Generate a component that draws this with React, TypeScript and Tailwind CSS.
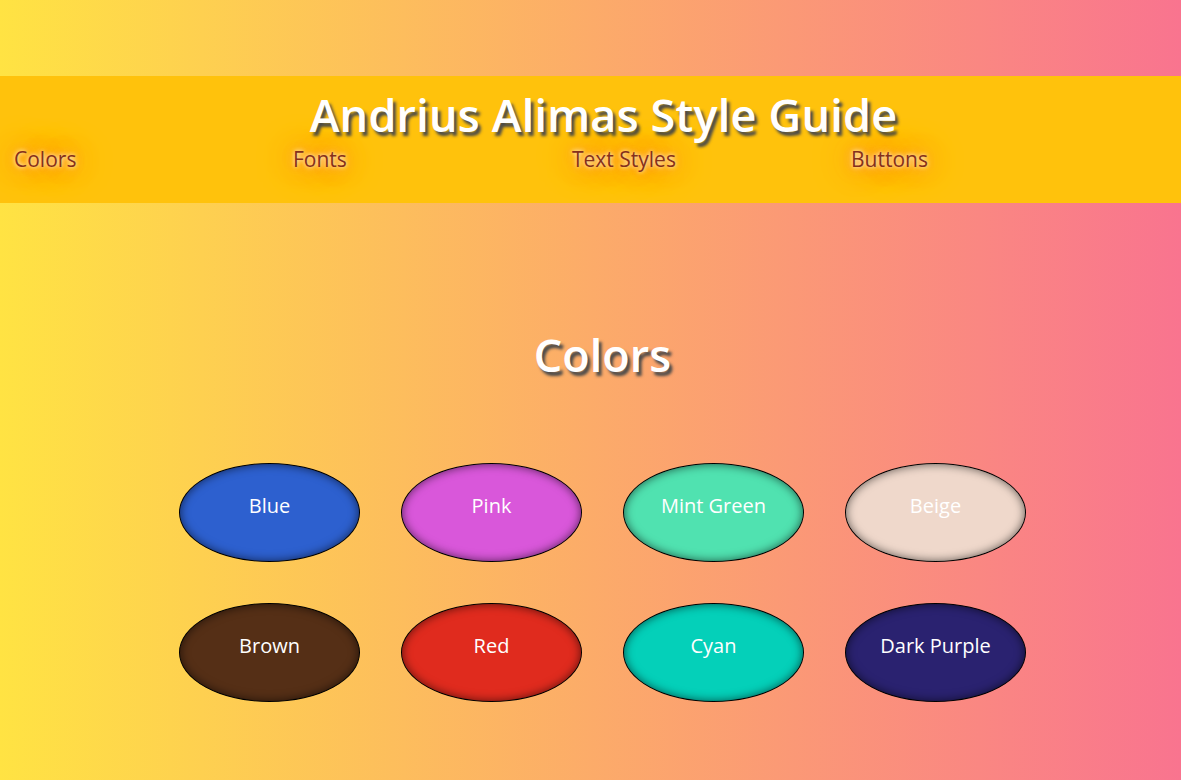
const navLinks = ["Colors", "Fonts", "Text Styles", "Buttons"];

const swatches = [
  { name: "Blue", bg: "bg-[#2d60cf]" },
  { name: "Pink", bg: "bg-[#d957da]" },
  { name: "Mint Green", bg: "bg-[#50e2b0]" },
  { name: "Beige", bg: "bg-[#efd8cb]" },
  { name: "Brown", bg: "bg-[#552f16]" },
  { name: "Red", bg: "bg-[#e02b1e]" },
  { name: "Cyan", bg: "bg-[#04d0b9]" },
  { name: "Dark Purple", bg: "bg-[#2a2270]" },
];

export default function App() {
  return (
    <div className="min-h-[780px] w-full bg-[linear-gradient(to_right,#ffe343,#f9748f)] font-['Open_Sans',sans-serif]">
      <div className="h-[76px]" />
      <header className="h-[127px] bg-[#ffc20c] pt-[10px]">
        <h1 className="pl-[26px] text-center text-[45px] leading-[58px] font-semibold tracking-[0.2px] text-white [text-shadow:3px_4px_3px_#4a4a4a]">
          Andrius Alimas Style Guide
        </h1>
        <nav className="flex pl-[14px]">
          {navLinks.map((l) => (
            <a
              key={l}
              href="#"
              className="w-[279px] text-[21px] leading-[30px] text-[#86301a] [text-shadow:0_0_4px_#fff,0_0_10px_#ffb070,0_0_20px_#ff8a30,0_0_30px_#ff8a30,0_0_40px_#ff9a40]"
            >
              {l}
            </a>
          ))}
        </nav>
      </header>

      <main className="pl-[24px] pt-[122px]">
        <h2 className="text-center text-[45px] leading-[60px] font-semibold text-white [text-shadow:3px_4px_3px_#4a4a4a]">
          Colors
        </h2>
        <div className="mx-auto mt-[78px] grid w-[847px] grid-cols-4 gap-x-[41px] gap-y-[41px]">
          {swatches.map((s) => (
            <div
              key={s.name}
              className={`${s.bg} h-[99px] w-[181px] rounded-[50%] border border-black pt-[28px] text-center text-[20px] leading-[28px] text-white shadow-[inset_0_0_10px_rgba(0,0,0,0.6)]`}
            >
              {s.name}
            </div>
          ))}
        </div>
      </main>
    </div>
  );
}
